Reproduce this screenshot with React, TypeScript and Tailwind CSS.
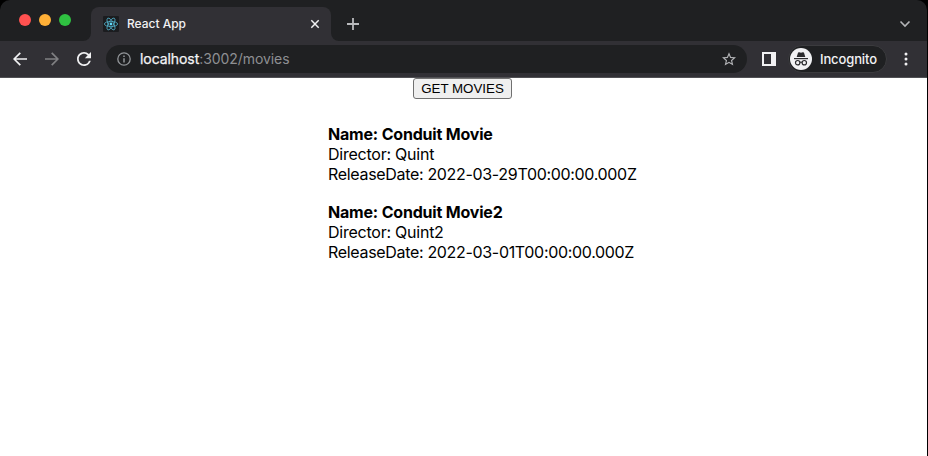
import React from "react";

const movies = [
  { name: "Conduit Movie", director: "Quint", date: "2022-03-29T00:00:00.000Z" },
  { name: "Conduit Movie2", director: "Quint2", date: "2022-03-01T00:00:00.000Z" },
];

function ReactIcon() {
  return (
    <svg width="16" height="16" viewBox="0 0 16 16" className="shrink-0">
      <rect width="16" height="16" rx="1" fill="#1b1c1f" />
      <g stroke="#4fa9c2" strokeWidth="0.85" fill="none">
        <ellipse cx="8" cy="8" rx="6.6" ry="2.6" />
        <ellipse cx="8" cy="8" rx="6.6" ry="2.6" transform="rotate(60 8 8)" />
        <ellipse cx="8" cy="8" rx="6.6" ry="2.6" transform="rotate(120 8 8)" />
      </g>
      <circle cx="8" cy="8" r="1.4" fill="#61dafb" />
    </svg>
  );
}

function TabStrip() {
  return (
    <div className="flex h-[41px] items-end rounded-t-[10px] bg-[#1f2022]">
      <div className="flex w-[83px] gap-2 self-start pt-[14px] pl-[19px]">
        <span className="size-3 rounded-full bg-[#ff5150]" />
        <span className="size-3 rounded-full bg-[#ffb037]" />
        <span className="size-3 rounded-full bg-[#2fc141]" />
      </div>
      <svg width="8" height="8" className="shrink-0"><path d="M8 0V8H0A8 8 0 0 0 8 0Z" fill="#313035" /></svg>
      <div className="flex h-[34px] w-[240px] items-center rounded-t-lg bg-[#313035] pr-[10px] pl-3">
        <ReactIcon />
        <span className="ml-2 flex-1 text-[12px] font-medium tracking-[-0.02px] text-[#f1f1f3]">React App</span>
        <svg width="12" height="12" viewBox="0 0 12 12"><path d="M2.3 2.3L9.7 9.7M9.7 2.3L2.3 9.7" stroke="#f1f1f3" strokeWidth="1.5" /></svg>
      </div>
      <svg width="8" height="8" className="shrink-0"><path d="M0 0V8H8A8 8 0 0 1 0 0Z" fill="#313035" /></svg>
      <svg width="12" height="12" viewBox="0 0 12 12" className="mb-[11px] ml-2"><path d="M6 0V12M0 6H12" stroke="#b9babd" strokeWidth="1.8" /></svg>
      <svg width="12" height="8" viewBox="0 0 12 8" className="mr-4 mb-[13px] ml-auto"><path d="M1.5 1.5L6 6L10.5 1.5" fill="none" stroke="#b4b5b8" strokeWidth="1.6" /></svg>
    </div>
  );
}

function AddressBar() {
  return (
    <div className="flex h-7 w-[641px] items-center rounded-full bg-[#1f2022] px-[11px]">
      <svg width="14" height="14" viewBox="0 0 14 14">
        <circle cx="7" cy="7" r="6.2" fill="none" stroke="#929599" strokeWidth="1.3" />
        <path d="M7 6.2V10.4M7 3.5V5" stroke="#929599" strokeWidth="1.5" />
      </svg>
      <div className="ml-[9px] flex-1 text-[14px] leading-5 tracking-[-0.07px] text-[#8e8f92]">
        <span className="text-[#f4f4f6] [-webkit-text-stroke:0.25px_#f4f4f6]">localhost</span>:3002/movies
      </div>
      <svg width="14" height="14" viewBox="0 0 24 24" fill="#b4b5b8">
        <path d="M24 9.2l-8.6-.75L12 .5 8.600 8.460 0 9.200l6.540 5.660L4.580 23.300 12 18.820l7.420 4.480-1.970-8.440L24 9.200zM12 16.570l-4.510 2.730 1.200-5.140-3.980-3.450 5.250-.45L12 5.400l2.050 4.850 5.250.45-3.980 3.450 1.200 5.140L12 16.570z" />
      </svg>
    </div>
  );
}

function Toolbar() {
  return (
    <div className="flex h-[37px] items-center border-b border-[#505054] bg-[#313035]">
      <svg width="14" height="14" viewBox="0 0 14 14" className="ml-[13px]"><path d="M14 7H1.400M7.300 .8L1.100 7L7.300 13.200" fill="none" stroke="#f1f1f3" strokeWidth="1.7" /></svg>
      <svg width="14" height="14" viewBox="0 0 14 14" className="ml-[18px]"><path d="M0 7H12.600M6.700 .8L12.900 7L6.700 13.200" fill="none" stroke="#808083" strokeWidth="1.7" /></svg>
      <svg width="14" height="14" viewBox="4 4 16 16" className="mr-[15px] ml-[18px]" fill="#f1f1f3"><path d="M17.650 6.350A7.960 7.960 0 0 0 12 4c-4.420 0-7.990 3.580-7.990 8s3.570 8 7.990 8c3.730 0 6.840-2.550 7.730-6h-2.080A5.990 5.990 0 0 1 12 18c-3.310 0-6-2.690-6-6s2.690-6 6-6c1.660 0 3.140.69 4.220 1.780L13 11h7V4l-2.350 2.350z" /></svg>
      <AddressBar />
      <svg width="14" height="14" viewBox="0 0 14 14" className="ml-[15px]"><path fillRule="evenodd" d="M0 0H14V14H0ZM2 2V12H9V2Z" fill="#f1f1f3" /></svg>
      <div className="ml-3 flex h-7 w-[99px] items-center rounded-full border border-[#3b3b3e] bg-[#1f2022] pl-[1px]">
        <svg width="22" height="22" viewBox="0 0 22 22" className="shrink-0">
          <circle cx="11" cy="11" r="11" fill="#f1f1f3" />
          <path d="M6.700 9L8 4.800Q8.300 4 9.200 4.300L11 4.700L12.800 4.300Q13.700 4 14 4.800L15.300 9Z" fill="#2b2b2e" />
          <path d="M4 10.600H18" stroke="#2b2b2e" strokeWidth="1.2" />
          <g fill="none" stroke="#2b2b2e" strokeWidth="1.200"><circle cx="7.700" cy="14.700" r="2.200" /><circle cx="14.300" cy="14.700" r="2.200" /><path d="M9.900 14.400Q11 13.600 12.100 14.400" /></g>
        </svg>
        <span className="ml-2 pt-[2px] text-[13px] font-medium tracking-[-0.12px] text-[#f1f1f3]">Incognito</span>
      </div>
      <svg width="4" height="14" viewBox="0 0 4 14" className="ml-[17px]" fill="#f1f1f3"><circle cx="2" cy="2" r="1.500" /><circle cx="2" cy="7" r="1.500" /><circle cx="2" cy="12" r="1.500" /></svg>
    </div>
  );
}

export default function App() {
  return (
    <div className="h-[456px] w-[928px] overflow-hidden bg-black pr-px font-['Inter',sans-serif]">
      <div className="flex h-full flex-col">
        <TabStrip />
        <Toolbar />
        <main className="flex-1 bg-white text-[16px] leading-5 text-black">
          <button className="ml-[413px] flex h-[21px] w-[99px] items-center justify-center rounded-[3px] border border-[#707070] bg-[#efefef] font-['Liberation_Sans',Arial,sans-serif] text-[13.333px]">GET MOVIES</button>
          <div className="mt-[25px] ml-[328px] flex flex-col gap-[18px]">
            {movies.map((m) => (
              <div key={m.name} className="whitespace-nowrap">
                <div className="font-bold tracking-[-0.19px]">Name: {m.name}</div>
                <div className="tracking-[-0.24px]">Director: {m.director}</div>
                <div className="tracking-[-0.32px]">ReleaseDate: {m.date}</div>
              </div>
            ))}
          </div>
        </main>
      </div>
    </div>
  );
}
